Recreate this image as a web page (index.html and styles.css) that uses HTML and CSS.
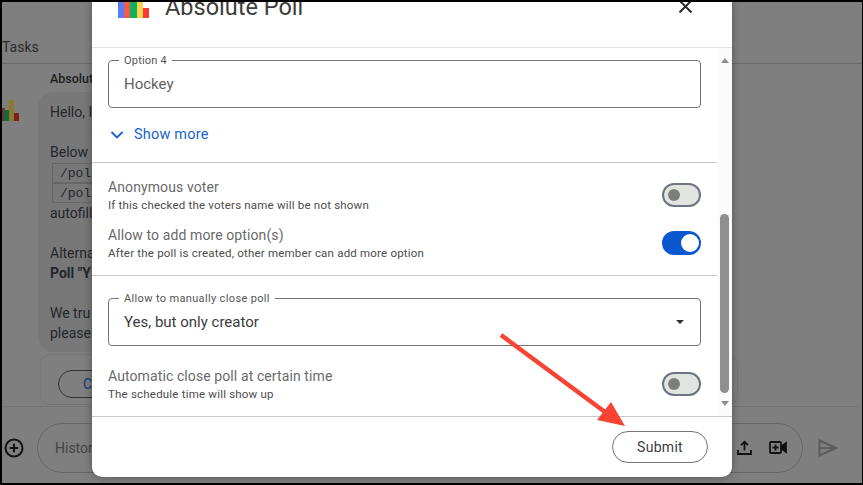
FILE: index.html
```html
<!DOCTYPE html>
<html>
<head>
 <meta charset="UTF-8">
 <title>Absolute Poll</title>
 <link rel="stylesheet" href="styles.css">
</head>
<body>
<div class="frame">
  <div class="chat">
    <div class="tabs">Tasks</div>
    <div class="thread">
      <svg class="avatar" width="18" height="22" viewBox="0 0 18 22">
        <rect x="0" y="9" width="3" height="13" fill="#7d2f2a"/>
        <rect x="2" y="11" width="5" height="11" fill="#0f6b3a"/>
        <rect x="7" y="1" width="5" height="21" fill="#8d7a2c"/>
        <rect x="12" y="14" width="5" height="8" fill="#7f1f1c"/>
      </svg>
      <div class="msg">
        <div class="sender">Absolut</div>
        <div class="bubble">
          <p>Hello, I</p>
          <p>Below
            <span class="cmd first">/pol</span>
            <span class="cmd">/pol</span>
            autofill
          </p>
          <p>Alterna<br><b>Poll "Y</b></p>
          <p class="last">We tru<br>please</p>
        </div>
        <div class="card"><span class="pill">C</span></div>
      </div>
    </div>
    <div class="composer">
      <svg class="plus" width="22" height="22" viewBox="0 0 22 22" fill="none" stroke="#111" stroke-width="2">
        <circle cx="11" cy="11" r="8.5"/><path d="M11 6.8v8.4M6.8 11h8.4"/>
      </svg>
      <div class="input">
        <span>Histor</span>
        <div class="input-icons">
          <svg width="15" height="15" viewBox="0 0 15 15" fill="none" stroke="#111" stroke-width="1.800">
            <path d="M7.500 10.500V2M4 5.200 7.500 1.800 11 5.200M1 10v4h13v-4"/>
          </svg>
          <svg width="18" height="13" viewBox="0 0 18 13" fill="none" stroke="#111" stroke-width="1.800">
            <rect x="1" y="1" width="11" height="11" rx="1"/><path d="M6.500 3.500v6M3.500 6.500h6"/>
            <path d="M13 5 17 2v9l-4-3z" fill="#111"/>
          </svg>
        </div>
      </div>
      <svg class="send" width="20" height="18" viewBox="0 0 20 18" fill="none" stroke="#5c5c5c" stroke-width="2">
        <path d="M1.500 1.500 18 9 1.500 16.500zM1.500 9H18"/>
      </svg>
    </div>
  </div>

  <div class="modal">
    <div class="modal-head">
      <svg class="logo" width="32" height="17" viewBox="0 0 32 17">
        <rect x="0" y="0" width="6" height="17" fill="#5a7df5"/>
        <rect x="6" y="1" width="6" height="16" fill="#ef5d4e"/>
        <rect x="12" y="1" width="7" height="16" fill="#0fb15a"/>
        <rect x="19" y="0" width="6" height="17" fill="#fbd24e"/>
        <rect x="25" y="7" width="6" height="10" fill="#fb3a36"/>
      </svg>
      <div class="modal-title">Absolute Poll</div>
      <svg class="close" width="15" height="15" viewBox="0 0 15 15" fill="none" stroke="#2b2b2b" stroke-width="2">
        <path d="M1.500 1.500l12 12M13.500 1.500l-12 12"/>
      </svg>
    </div>
    <div class="modal-body">
      <div class="form">
        <div class="section">
          <div class="field">
            <span class="legend">Option 4</span>
            <span class="value muted">Hockey</span>
          </div>
          <div class="more">
            <svg width="14" height="8" viewBox="0 0 14 8" fill="none" stroke="#1a5fd0" stroke-width="1.800">
              <path d="M1.500 1 7 6.500 12.500 1"/>
            </svg>
            <span>Show more</span>
          </div>
        </div>
        <div class="section toggles">
          <div class="row">
            <div class="text"><div class="label">Anonymous voter</div><div class="hint">If this checked the voters name will be not shown</div></div>
            <span class="switch"></span>
          </div>
          <div class="row">
            <div class="text"><div class="label">Allow to add more option(s)</div><div class="hint">After the poll is created, other member can add more option</div></div>
            <span class="switch on"></span>
          </div>
        </div>
        <div class="section last-section">
          <div class="field select">
            <span class="legend wide">Allow to manually close poll</span>
            <span class="value">Yes, but only creator</span>
            <span class="caret"></span>
          </div>
          <div class="row auto">
            <div class="text"><div class="label">Automatic close poll at certain time</div><div class="hint">The schedule time will show up</div></div>
            <span class="switch"></span>
          </div>
        </div>
      </div>
      <div class="scrollbar">
        <span class="arrow up"></span>
        <span class="thumb"></span>
        <span class="arrow down"></span>
      </div>
    </div>
    <div class="modal-foot"><span class="submit">Submit</span></div>
  </div>

  <svg class="pointer" width="140" height="110" viewBox="0 0 140 110">
    <path d="M2 2 106 79" fill="none" stroke="#f84335" stroke-width="4.500"/>
    <path d="M126 93 98 87 112 69z" fill="#f84335"/>
  </svg>
</div>
</body>
</html>
```

FILE: styles.css
```css
* { box-sizing: border-box; }
html, body { margin: 0; height: 100%; overflow: hidden; }
body { background: #000; font-family: Roboto, "Liberation Sans", sans-serif; color: #1f1f1f; }
p { margin: 0; }

.frame { position: relative; width: 863px; height: 485px; padding: 2px 1px 2px 2px; background: #000; }

/* page behind the dialog, dimmed */
.chat { height: 100%; background: #7f7f7f; display: flex; flex-direction: column; color: #23262c; }
.tabs { height: 62px; padding-top: 37px; font-size: 14px; border-bottom: 1px solid #6a6a6a; color: #2a2a2a; }
.thread { flex: 1; display: flex; gap: 18px; padding-top: 7px; min-height: 0; }
.avatar { margin-top: 28px; flex: none; }
.msg { width: 700px; }
.sender { font-size: 12.500px; font-weight: 500; margin-left: 12px; line-height: 16px; color: #1d1d1d; }
.bubble { margin-top: 5px; width: 500px; height: 260px; background: #787878; border-radius: 16px; padding: 10px 12px; font-size: 14px; line-height: 20px; }
.bubble p { margin-bottom: 20px; }
.bubble p.last { margin-bottom: 0; }
.cmd { display: block; font-family: "Liberation Mono", monospace; font-size: 13px; border: 1px solid #666; margin-left: 2px; padding-left: 7px; height: 20px; line-height: 19px; }
.cmd.first { margin-top: 1px; }
.card { margin: 2px 0 0 2px; height: 51px; border: 1px solid #767676; border-radius: 10px; padding: 15px 17px; }
.pill { display: inline-block; width: 120px; height: 28px; border: 1px solid #333; border-radius: 14px; padding-left: 24px; font-size: 14px; line-height: 26px; color: #0d3a80; }

.composer { height: 77px; border-top: 1px solid #757575; display: flex; align-items: center; padding-top: 5px; }
.plus { margin-left: 1px; flex: none; }
.input { margin-left: 12px; width: 766px; height: 50px; border: 1px solid #666; border-radius: 25px; display: flex; align-items: center; justify-content: space-between; padding: 0 15px 0 17px; font-size: 14px; color: #444; }
.input-icons { display: flex; align-items: center; gap: 17px; }
.send { margin-left: 15px; flex: none; }

/* dialog */
.modal { position: absolute; left: 92px; top: 2px; width: 640px; height: 475px; background: #fff; border-radius: 0 0 10px 10px; display: flex; flex-direction: column; box-shadow: 0 0 10px rgba(0,0,0,.35); overflow: hidden; }
.modal-head { height: 46px; flex: none; border-bottom: 1px solid #e3e3e3; display: flex; align-items: flex-start; padding-left: 26px; }
.logo { flex: none; margin-top: -1px; }
.modal-title { margin: -9px 0 0 15px; font-size: 23.500px; line-height: 28px; color: #3c3c3c; flex: 1; }
.close { flex: none; margin: -3px 39px 0 0; }

.modal-body { flex: 1; display: flex; min-height: 0; }
.form { flex: 1; min-width: 0; }
.section { padding: 0 16px; border-bottom: 1px solid #c9c9c9; }
.section:first-child { padding-top: 12px; height: 115px; }
.toggles { height: 113px; padding-top: 8px; }
.last-section { border-bottom: 0; padding-top: 22px; }

.field { position: relative; height: 48px; border: 1px solid #747474; border-radius: 4px; padding: 0 15px; display: flex; align-items: center; }
.legend { position: absolute; left: 10px; top: -7px; padding: 0 5px; background: #fff; font-size: 11px; line-height: 13px; letter-spacing: .2px; color: #555; }
.legend.wide { letter-spacing: .35px; }
.value { font-size: 15px; color: #3c3c3c; }
.value.muted { color: #5f5f5f; }
.caret { position: absolute; right: 16px; top: 21px; border: 4.500px solid transparent; border-top-color: #333; border-bottom: 0; }

.more { display: flex; align-items: center; gap: 10px; margin-top: 18px; padding-left: 2px; font-size: 14.500px; letter-spacing: .2px; color: #1a5fd0; line-height: 18px; }

.row { display: flex; align-items: center; justify-content: space-between; height: 48px; }
.text { padding-top: 2px; }
.label { font-size: 14px; line-height: 18px; letter-spacing: .1px; color: #6a6a6a; }
.hint { font-size: 11.500px; line-height: 18px; letter-spacing: .2px; color: #4c4c4c; }
.row.auto { margin-top: 14px; }

.switch { position: relative; flex: none; width: 39px; height: 24px; border: 2px solid #6b7480; border-radius: 12px; background: #e2e4e0; }
.switch::after { content: ""; position: absolute; left: 4px; top: 4px; width: 12px; height: 12px; border-radius: 50%; background: #7d7f7d; }
.switch.on { border-color: #0b57d0; background: #0b57d0; }
.switch.on::after { left: 17px; top: 1px; width: 18px; height: 18px; background: #fff; }

.scrollbar { width: 15px; flex: none; background: #fbfbfb; display: flex; flex-direction: column; align-items: center; }
.thumb { width: 9px; height: 179px; margin-top: 151px; border-radius: 5px; background: #8f8f8f; }
.arrow { width: 0; height: 0; border: 4.500px solid transparent; }
.arrow.up { margin-top: 10px; border-bottom: 5px solid #8f8f8f; border-top: 0; }
.arrow.down { margin-top: 8px; border-top: 5px solid #8f8f8f; border-bottom: 0; }

.modal-foot { height: 61px; flex: none; border-top: 1px solid #c9c9c9; display: flex; justify-content: flex-end; align-items: flex-start; padding: 14px 24px 0 0; }
.submit { width: 96px; height: 32px; border: 1px solid #747474; border-radius: 16px; text-align: center; font-size: 14px; line-height: 30px; letter-spacing: .3px; color: #3c3c3c; }

.pointer { position: absolute; left: 499px; top: 333px; }
```
